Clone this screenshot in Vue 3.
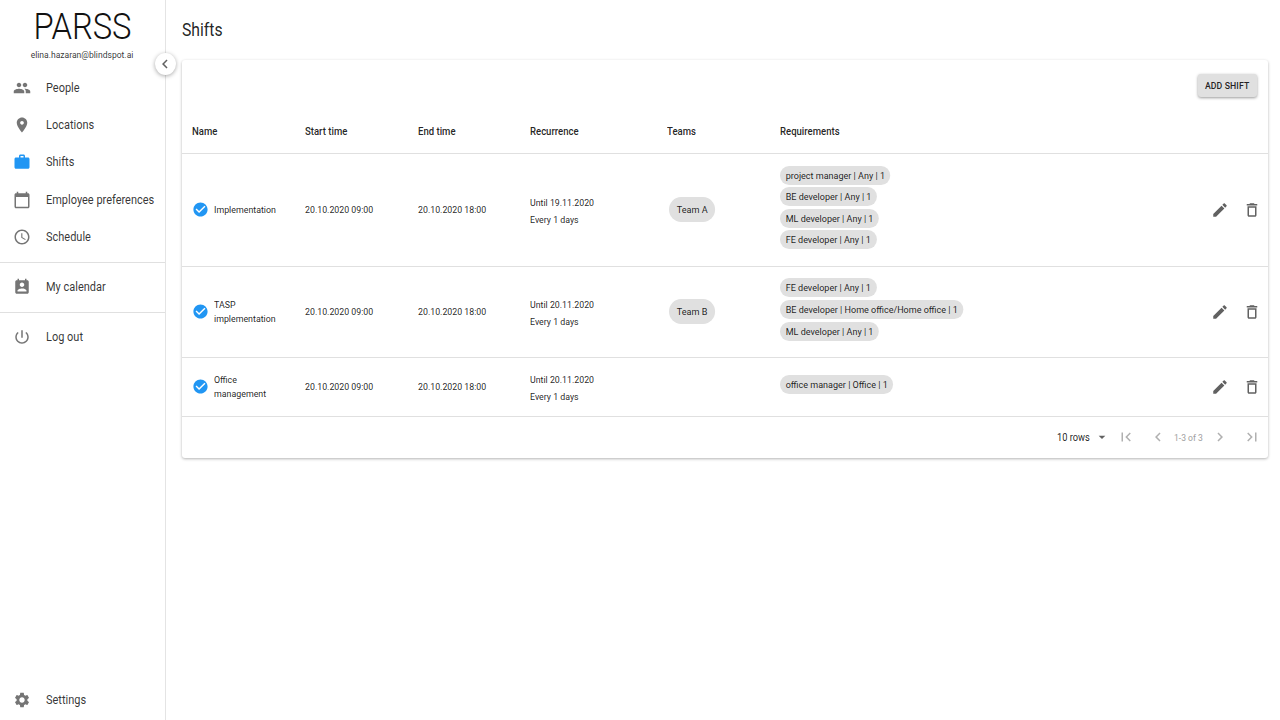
<script setup>
const icons = {
  people: 'M16 11c1.66 0 2.99-1.34 2.99-3S17.66 5 16 5c-1.66 0-3 1.34-3 3s1.34 3 3 3zm-8 0c1.66 0 2.99-1.34 2.99-3S9.66 5 8 5C6.34 5 5 6.34 5 8s1.34 3 3 3zm0 2c-2.33 0-7 1.17-7 3.5V19h14v-2.5c0-2.33-4.67-3.5-7-3.5zm8 0c-.29 0-.62.02-.97.05 1.16.84 1.97 1.97 1.97 3.45V19h6v-2.5c0-2.33-4.67-3.5-7-3.5z',
  place: 'M12 2C8.13 2 5 5.13 5 9c0 5.25 7 13 7 13s7-7.75 7-13c0-3.87-3.13-7-7-7zm0 9.5c-1.38 0-2.5-1.12-2.5-2.5s1.12-2.5 2.5-2.5 2.5 1.12 2.5 2.5-1.12 2.5-2.5 2.5z',
  work: 'M20 6h-4V4c0-1.11-.89-2-2-2h-4c-1.11 0-2 .89-2 2v2H4c-1.11 0-1.99.89-1.99 2L2 19c0 1.11.89 2 2 2h16c1.11 0 2-.89 2-2V8c0-1.11-.89-2-2-2zm-6 0h-4V4h4v2z',
  calendar: 'M20 3h-1V1h-2v2H7V1H5v2H4c-1.1 0-2 .9-2 2v16c0 1.1.9 2 2 2h16c1.1 0 2-.9 2-2V5c0-1.1-.9-2-2-2zm0 18H4V8h16v13z',
  schedule: 'M11.99 2C6.47 2 2 6.48 2 12s4.47 10 9.99 10C17.52 22 22 17.52 22 12S17.52 2 11.99 2zM12 20c-4.42 0-8-3.58-8-8s3.58-8 8-8 8 3.58 8 8-3.58 8-8 8zm.5-13H11v6l5.25 3.15.75-1.23-4.5-2.67z',
  contact: 'M19 3h-1V1h-2v2H8V1H6v2H5c-1.11 0-2 .9-2 2v14c0 1.1.89 2 2 2h14c1.1 0 2-.9 2-2V5c0-1.1-.9-2-2-2zm-7 3c1.66 0 3 1.34 3 3s-1.34 3-3 3-3-1.34-3-3 1.34-3 3-3zm6 12H6v-1c0-2 4-3.1 6-3.1s6 1.1 6 3.1v1z',
  power: 'M13 3h-2v10h2V3zm4.83 2.17l-1.42 1.42C17.99 7.86 19 9.81 19 12c0 3.87-3.13 7-7 7s-7-3.13-7-7c0-2.19 1.01-4.14 2.58-5.42L6.17 5.17C4.23 6.82 3 9.26 3 12c0 4.97 4.03 9 9 9s9-4.03 9-9c0-2.74-1.23-5.18-3.17-6.83z',
  settings: 'M19.14 12.94c.04-.3.06-.61.06-.94 0-.32-.02-.64-.07-.94l2.03-1.58c.18-.14.23-.41.12-.61l-1.92-3.32c-.12-.22-.37-.29-.59-.22l-2.39.96c-.5-.38-1.03-.7-1.62-.94l-.36-2.54c-.04-.24-.24-.41-.48-.41h-3.84c-.24 0-.43.17-.47.41l-.36 2.54c-.59.24-1.13.57-1.62.94l-2.39-.96c-.22-.08-.47 0-.59.22L2.74 8.87c-.12.21-.08.47.12.61l2.03 1.58c-.05.3-.09.63-.09.94s.02.64.07.94l-2.03 1.58c-.18.14-.23.41-.12.61l1.92 3.32c.12.22.37.29.59.22l2.39-.96c.5.38 1.03.7 1.62.94l.36 2.54c.05.24.24.41.48.41h3.84c.24 0 .44-.17.47-.41l.36-2.54c.59-.24 1.13-.56 1.62-.94l2.39.96c.22.08.47 0 .59-.22l1.92-3.32c.12-.22.07-.47-.12-.61l-2.01-1.58zM12 15.6c-1.98 0-3.6-1.62-3.6-3.6s1.62-3.6 3.6-3.6 3.6 1.62 3.6 3.6-1.62 3.6-3.6 3.6z',
  check: 'M12 2C6.48 2 2 6.48 2 12s4.48 10 10 10 10-4.48 10-10S17.52 2 12 2zm-2 15l-5-5 1.41-1.41L10 14.17l7.59-7.59L19 8l-9 9z',
  edit: 'M3 17.25V21h3.75L17.81 9.94l-3.75-3.75L3 17.25zM20.71 7.04c.39-.39.39-1.02 0-1.41l-2.34-2.34c-.39-.39-1.02-.39-1.41 0l-1.83 1.83 3.75 3.75 1.83-1.83z',
  trash: 'M6 19c0 1.1.9 2 2 2h8c1.1 0 2-.9 2-2V7H6v12zM8 9h8v10H8V9zm7.5-5l-1-1h-5l-1 1H5v2h14V4z',
  left: 'M15.41 7.41L14 6l-6 6 6 6 1.41-1.41L10.83 12z',
  right: 'M10 6L8.59 7.41 13.17 12l-4.58 4.59L10 18l6-6z',
  first: 'M18.41 16.59L13.82 12l4.59-4.59L17 6l-6 6 6 6zM6 6h2v12H6z',
  last: 'M5.59 7.41L10.18 12l-4.59 4.59L7 18l6-6-6-6zM16 6h2v12h-2z',
  drop: 'M7 10l5 5 5-5z',
}
const nav1 = [
  { label: 'People', icon: 'people' },
  { label: 'Locations', icon: 'place' },
  { label: 'Shifts', icon: 'work', active: true },
  { label: 'Employee preferences', icon: 'calendar' },
  { label: 'Schedule', icon: 'schedule' },
]
const headers = ['Name', 'Start time', 'End time', 'Recurrence', 'Teams', 'Requirements']
const rows = [
  { name: 'Implementation', until: 'Until 19.11.2020', team: 'Team A', h: 113,
    reqs: ['project manager | Any | 1', 'BE developer | Any | 1', 'ML developer | Any | 1', 'FE developer | Any | 1'] },
  { name: 'TASP implementation', until: 'Until 20.11.2020', team: 'Team B', h: 91,
    reqs: ['FE developer | Any | 1', 'BE developer | Home office/Home office | 1', 'ML developer | Any | 1'] },
  { name: 'Office management', until: 'Until 20.11.2020', team: '', h: 59,
    reqs: ['office manager | Office | 1'] },
]
</script>

<template>
  <div class="app">
    <aside class="side">
      <div class="brand">
        <div class="logo">PARSS</div>
        <div class="mail">elina.hazaran@blindspot.ai</div>
      </div>
      <nav class="group">
        <div v-for="n in nav1" :key="n.label" class="item" :class="{ active: n.active }">
          <svg class="ico" viewBox="0 0 24 24"><path :d="icons[n.icon]" /></svg>
          <span>{{ n.label }}</span>
        </div>
      </nav>
      <div class="group bordered">
        <div class="item"><svg class="ico" viewBox="0 0 24 24"><path :d="icons.contact" /></svg><span>My calendar</span></div>
      </div>
      <div class="group bordered">
        <div class="item"><svg class="ico" viewBox="0 0 24 24"><path :d="icons.power" /></svg><span>Log out</span></div>
      </div>
      <div class="item bottom"><svg class="ico" viewBox="0 0 24 24"><path :d="icons.settings" /></svg><span>Settings</span></div>
      <button class="collapse"><svg viewBox="0 0 24 24"><path :d="icons.left" /></svg></button>
    </aside>
    <main class="main">
      <h1 class="title">Shifts</h1>
      <section class="card">
        <div class="toolbar"><button class="add"><span>ADD SHIFT</span></button></div>
        <div class="row head">
          <div v-for="h in headers" :key="h">{{ h }}</div>
        </div>
        <div v-for="r in rows" :key="r.name" class="row body" :style="{ height: r.h + 'px' }">
          <div class="name">
            <svg class="check" viewBox="0 0 24 24"><path :d="icons.check" /></svg>
            <span>{{ r.name }}</span>
          </div>
          <div class="cell">20.10.2020 09:00</div>
          <div class="cell">20.10.2020 18:00</div>
          <div class="cell rec"><div>{{ r.until }}</div><div>Every 1 days</div></div>
          <div><span v-if="r.team" class="team">{{ r.team }}</span></div>
          <div class="chips"><span v-for="q in r.reqs" :key="q" class="chip">{{ q }}</span></div>
          <div class="actions">
            <svg viewBox="0 0 24 24"><path :d="icons.edit" /></svg>
            <svg viewBox="0 0 24 24"><path :d="icons.trash" /></svg>
          </div>
        </div>
        <div class="foot">
          <span class="rows">10 rows</span>
          <svg class="drop" viewBox="0 0 24 24"><path :d="icons.drop" /></svg>
          <svg class="pg first" viewBox="0 0 24 24"><path :d="icons.first" /></svg>
          <svg class="pg prev" viewBox="0 0 24 24"><path :d="icons.left" /></svg>
          <span class="count">1-3 of 3</span>
          <svg class="pg next" viewBox="0 0 24 24"><path :d="icons.right" /></svg>
          <svg class="pg last" viewBox="0 0 24 24"><path :d="icons.last" /></svg>
        </div>
      </section>
    </main>
  </div>
</template>

<style>
html, body { margin: 0; background: #fff; }
</style>

<style scoped>
.app { display: flex; width: 1280px; height: 720px; overflow: hidden; font-family: Roboto, sans-serif; color: rgba(0,0,0,.87); background: #fff; }
.side { position: relative; width: 165px; flex: none; border-right: 1px solid #e4e4e4; display: flex; flex-direction: column; }
.brand { height: 69px; text-align: center; }
.logo { font-size: 36px; font-weight: 300; line-height: 42px; margin-top: 6px; color: #111; transform: scaleX(.91); }
.mail { font-size: 9.5px; line-height: 12px; margin-top: 1px; color: rgba(0,0,0,.8); transform: scaleX(.9); white-space: nowrap; margin-left: -1px; }
.group { padding-bottom: 6px; }
.bordered { border-top: 1px solid #e0e0e0; padding: 5px 0 7px; }
.item { height: 37.4px; display: flex; align-items: center; font-size: 12px; color: rgba(0,0,0,.8); }
.item span { transform: scaleX(.915); transform-origin: left center; white-space: nowrap; }
.item .ico { width: 18px; height: 18px; margin: 0 15px 0 13px; fill: #757575; flex: none; }
.item.active .ico { fill: #2196f3; }
.bottom { margin-top: auto; margin-bottom: 1px; }
.collapse { position: absolute; left: 155px; top: 53px; width: 21px; height: 22px; padding: 2px; border: 0; border-radius: 50%; background: #fff; box-shadow: 0 1px 4px rgba(0,0,0,.35); z-index: 2; }
.collapse svg { display: block; width: 18px; height: 18px; margin-left: -1px; fill: #616161; }
.main { flex: 1; min-width: 0; padding: 0 12px 0 16px; }
.title { margin: 0; height: 60px; font-size: 18px; font-weight: 400; line-height: 59px; transform: scaleX(.875); transform-origin: left center; }
.card { border-radius: 3px; background: #fff; box-shadow: 0 1px 3px rgba(0,0,0,.3); }
.toolbar { height: 50px; display: flex; justify-content: flex-end; align-items: flex-end; padding-right: 11px; }
.add { width: 59px; height: 23px; padding: 0; margin-bottom: 13px; border: 0; border-radius: 3px; background: #e0e0e0; font: 500 9.5px Roboto, sans-serif; color: rgba(0,0,0,.87); box-shadow: 0 1px 3px rgba(0,0,0,.4); }
.add span { display: inline-block; transform: scaleX(.92); white-space: nowrap; letter-spacing: .1px; }
.row { display: grid; grid-template-columns: 123px 112.5px 112.5px 137px 113px 1fr 57px; align-items: center; border-bottom: 1px solid #e0e0e0; }
.row > div:first-child { padding-left: 10px; }
.head { height: 43px; font-size: 10.5px; font-weight: 500; box-sizing: content-box; }
.head > div { transform: scaleX(.91); transform-origin: left center; }
.head > div:first-child { transform-origin: 10px center; }
.body { font-size: 9.5px; box-sizing: border-box; padding-bottom: 1px; }
.cell { transform: scaleX(.925); transform-origin: left center; }
.name { display: flex; align-items: center; }
.name span { width: 75px; line-height: 14px; margin-left: 5px; transform: scaleX(.93); transform-origin: left center; }
.check { width: 17px; height: 17px; fill: #2196f3; flex: none; }
.rec { line-height: 17px; padding-top: 2px; }
.team { display: inline-block; margin-left: 2px; padding: 0 8px; height: 25px; line-height: 25px; border-radius: 13px; background: #e0e0e0; transform: scaleX(.96); transform-origin: left center; }
.chips { display: flex; flex-direction: column; align-items: flex-start; gap: 2.6px; padding-bottom: 4px; }
.chip { height: 19px; line-height: 19px; padding: 0 6px; border-radius: 10px; background: #e0e0e0; white-space: nowrap; transform: scaleX(.95); transform-origin: left center; }
.actions { display: flex; gap: 14px; }
.actions svg { width: 18px; height: 18px; fill: #616161; }
.foot { height: 41px; box-sizing: border-box; padding-bottom: 1px; display: flex; align-items: center; position: relative; font-size: 10px; }
.rows { margin-left: 875px; width: 34px; white-space: nowrap; transform: scaleX(.93); transform-origin: left center; }
.drop { width: 16px; height: 16px; fill: #616161; margin-left: 3px; }
.pg { width: 18px; height: 18px; fill: #b0b0b0; flex: none; }
.first { margin-left: 7px; }
.prev { margin-left: 14px; }
.count { margin-left: 7px; width: 29px; white-space: nowrap; color: #9e9e9e; font-size: 9.5px; transform: scaleX(.9); transform-origin: left center; }
.next { margin-left: 7.5px; }
.last { margin-left: 14px; }
</style>
